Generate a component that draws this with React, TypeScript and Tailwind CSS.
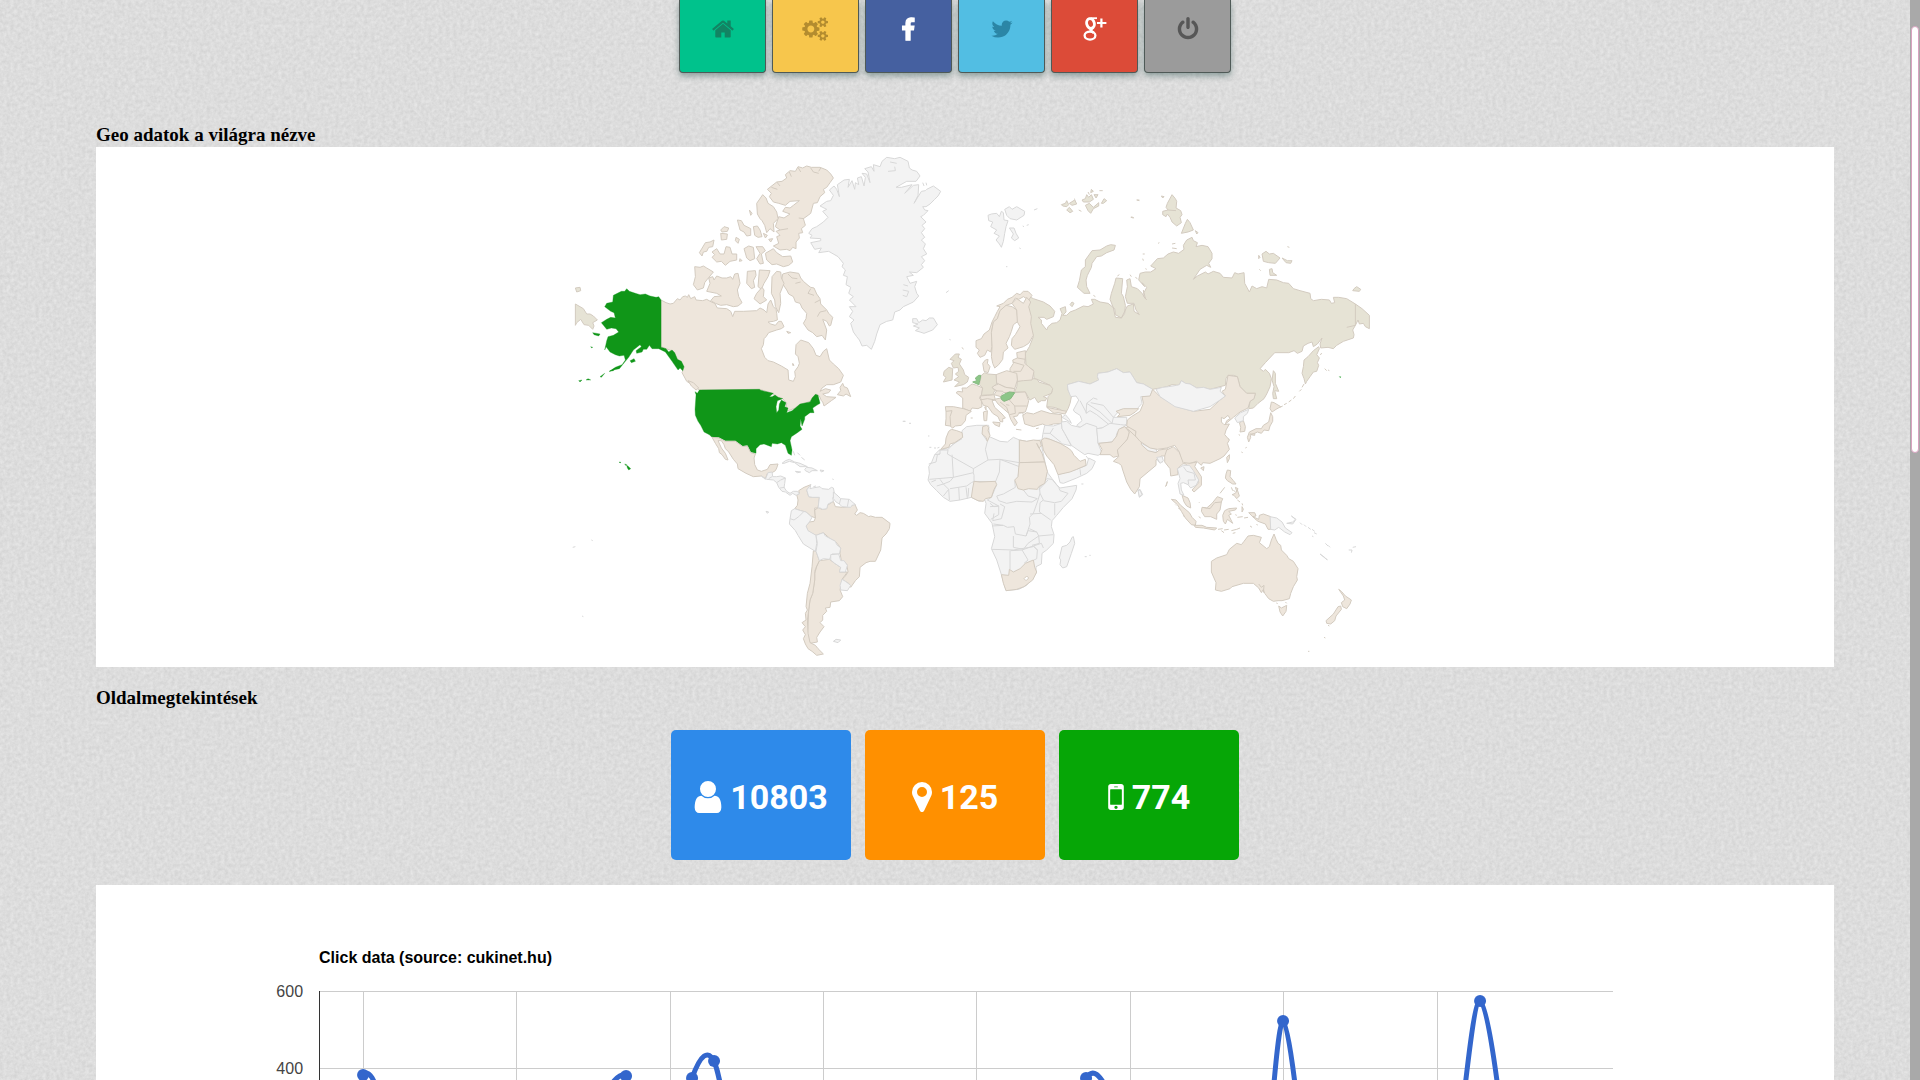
import React from "react";

type Shape = { fill: string; paths: string[] };
type Tile = { dx: number; dy: number; shapes: Shape[] };

const TAN = "#eee6dc";
const OLIVE = "#e6e3d5";
const GREY = "#f3f3f3";
const SAND = "#e6e1d3";
const GREEN = "#109618";
const MINT = "#8cc688";

// Each tile holds a part of the world drawn at three units per pixel.
const world: Tile[] = [
  {
    dx: 560,
    dy: 150,
    shapes: [
      {
        fill: TAN,
        paths: [
          "M303 450L318 458L330 462L340 460L352 446L360 450L368 440L376 438L382 442L386 434L392 446L404 440L408 450L428 452L440 448L454 456L464 460L472 474L500 476L512 484L518 500L524 484L550 484L590 482L600 474L612 480L620 488L624 462L632 450L640 470L648 478L650 490L652 510L640 514L624 516L632 522L646 526L656 514L664 514L672 530L664 536L650 540L626 548L618 560L612 566L610 584L604 596L614 622L624 632L640 636L664 648L684 660L686 690L700 694L706 680L704 664L714 650L718 640L714 620L706 612L708 584L722 570L746 578L760 596L768 616L780 620L790 604L800 596L808 630L820 642L836 656L850 676L842 696L820 704L800 704L786 714L780 724L796 716L812 720L806 728L788 732L800 740L828 742L814 752L792 768L788 756L784 752L778 738L770 732L764 744L750 754L720 764L706 774L690 780L676 784L680 760L668 746L650 740L636 730L600 718L418 720L396 704L380 694L366 668L372 652L352 628L340 604L318 596L303 590Z",
          "M668 372L690 366L716 370L722 384L730 394L744 406L752 412L762 414L770 432L780 446L782 462L800 480L806 490L818 502L812 526L808 528L800 514L788 508L800 540L796 570L786 556L770 560L758 548L744 540L730 520L738 506L740 490L726 474L720 460L706 456L700 440L686 432L680 420L664 396Z",
          "M684 372L696 384L712 386 M722 396L706 400 M752 416L744 430L762 436 M780 450L764 458 M798 482L780 486L772 500",
          "M446 384L458 380L462 390L470 378L486 384L500 384L512 380L518 388L524 372L534 370L540 400L532 420L536 440L546 458L534 468L520 470L500 464L482 466L466 460L452 452L462 440L484 438L470 430L440 424L450 400Z",
          "M404 350L420 352L430 348L440 354L460 366L450 378L440 390L434 398L430 414L412 420L400 404L406 380Z",
          "M622 118L650 96L666 94L680 84L676 74L690 62L706 64L714 50L728 54L740 48L754 52L780 52L800 60L812 72L820 84L810 98L800 112L790 118L794 128L780 140L772 158L760 160L752 190L744 196L730 206L736 226L724 236L728 248L716 250L718 264L708 276L708 296L698 292L690 302L680 298L660 300L640 288L656 280L650 260L660 256L648 244L660 240L646 230L656 200L672 204L690 192L668 184L676 172L690 174L700 166L718 152L690 154L676 166L656 160L640 156L628 140L634 130Z",
          "M634 112L652 118 M650 96L660 108 M688 66L694 80 M714 52L722 66 M752 54L760 66L776 70 M782 54L776 64 M660 240L684 236 M732 206L716 204",
          "M608 134L618 144L624 160L640 170L650 186L654 206L640 220L642 246L630 236L620 248L614 226L606 212L600 206L592 192L590 160Z",
          "M616 310L640 296L650 308L668 320L692 318L698 336L686 346L670 350L650 342L636 344L620 330Z",
          "M456 306L470 296L480 312L492 312L498 290L510 292L516 312L530 312L530 330L510 334L496 346L484 334L470 336L456 322L464 314Z",
          "M418 308L436 278L450 276L462 270L458 290L446 292L440 304L430 306L426 318Z",
          "M532 210L544 212L552 226L572 236L572 256L560 258L552 246L540 240Z",
          "M580 230L592 228L600 240L606 260L594 262L584 256Z",
          "M482 250L502 252L500 268L484 270Z",
          "M482 240L492 230L506 234L502 244L486 246Z",
          "M552 296L566 288L580 292L584 326L570 332L560 324Z",
          "M588 290L608 290L616 302L604 312L610 340L600 342L590 326L600 310Z",
          "M562 364L586 362L588 376L580 392L584 412L574 416L560 400Z",
          "M598 360L630 362L624 380L612 400L604 418L594 410Z",
          "M590 430L606 412L612 420L610 440L620 450L600 462L582 446Z",
          "M636 380L650 364L662 366L664 384L672 400L660 430L662 460L656 488L646 470L644 450L634 430Z",
          "M848 700L852 710L862 714L872 740L858 732L850 738L832 734L842 722L840 712Z",
          "M384 692L400 698L416 714L408 720L394 708Z",
          "M528 262L538 268L534 280L526 272Z M568 180L576 190L572 196Z M540 326L546 332L538 334Z M610 250L622 256L616 264Z M626 268L638 266L632 276Z",
          "M680 544L692 548L684 550Z M698 640L702 646L698 646Z",
        ],
      },
      {
        fill: GREY,
        paths: [
          "M746 250L756 236L770 230L790 216L804 202L788 184L800 178L780 168L800 154L812 152L820 136L808 120L822 108L830 118L838 140L832 104L852 90L868 88L864 112L876 92L884 118L886 98L896 104L892 84L904 80L912 108L916 82L906 70L920 72L930 98L924 66L914 56L934 50L942 64L940 44L960 50L966 34L980 22L1004 26L1020 22L1044 34L1048 54L1056 60L1070 64L1080 78L1068 94L1040 94L1008 112L1024 112L1056 104L1044 118L1034 130L1060 106L1076 104L1074 136L1062 160L1084 124L1096 122L1100 118L1120 108L1142 124L1134 138L1124 148L1110 162L1098 170L1088 170L1094 180L1104 182L1090 196L1082 200L1098 216L1086 226L1094 236L1084 248L1094 262L1084 270L1096 282L1090 296L1100 312L1084 320L1094 332L1084 344L1090 352L1070 368L1048 366L1060 376L1040 380L1050 400L1070 394L1064 410L1070 430L1076 438L1060 456L1030 470L1020 480L1004 486L998 510L980 514L960 524L950 552L944 574L934 598L920 586L906 588L898 570L890 560L880 546L872 520L882 510L868 500L878 484L868 470L888 470L868 450L880 440L866 430L872 412L858 404L862 380L850 376L856 360L846 350L850 340L834 320L806 304L776 308L784 294L764 298L752 278L782 272L782 266L750 264L756 256Z",
          "M984 64L1006 62L1004 50 M990 36L1010 40 M1028 420L1046 424L1040 440L1028 436 M1030 404L1044 408 M1088 98L1092 108 M1098 98L1100 106",
          "M1058 506L1070 506L1076 518L1088 510L1098 512L1108 504L1120 504L1132 524L1118 540L1092 550L1080 546L1066 542L1078 534L1060 528L1074 522L1058 518Z",
        ],
      },
      {
        fill: OLIVE,
        paths: [
          "M46 462L70 476L80 492L90 492L100 498L112 510L98 518L102 528L98 538L86 526L72 524L62 508L50 518L46 526Z",
          "M46 414L60 412L62 422L50 426Z",
        ],
      },
      {
        fill: GREEN,
        paths: [
          "M303 450L303 592L318 596L326 606L336 600L344 608L352 628L364 634L372 650L368 662L360 654L354 660L336 634L316 606L296 596L276 596L268 586L260 598L250 598L246 606L230 610L228 602L244 590L240 584L220 600L206 622L196 634L178 656L160 660L148 664L166 652L186 644L196 630L192 616L178 618L166 614L150 606L138 590L134 600L140 572L144 560L160 556L176 546L168 536L154 534L140 538L124 518L140 508L152 502L166 504L162 488L152 484L134 470L140 460L158 456L160 436L184 424L194 424L200 416L208 424L226 430L240 434L256 432L270 438L288 442L296 440Z",
          "M148 664L164 656L160 662Z M120 680L134 670L124 682Z M78 690L84 686L92 690Z M56 692L66 690L60 696Z M98 548L120 552L116 558L102 554Z M210 632L222 626L226 634L214 638Z M92 590L98 592L95 594Z",
        ],
      },
    ],
  },
  {
    dx: 560,
    dy: 380,
    shapes: [
      {
        fill: GREEN,
        paths: [
          "M405 35L412 40L418 30L598 28L602 31L640 40L628 50L636 50L645 45L654 52L668 56L652 62L648 80L650 98L656 90L658 72L664 60L678 68L674 80L684 84L680 98L696 92L706 84L720 72L750 66L756 54L766 43L774 46L780 70L770 76L758 84L762 98L750 98L734 110L734 118L726 138L722 116L720 138L726 148L712 158L694 170L690 182L696 210L694 226L684 220L676 196L664 188L652 192L636 190L634 200L612 192L600 194L588 206L588 220L572 216L562 196L548 198L526 182L496 182L476 172L456 172L448 164L432 156L422 136L414 124L406 106L405 88L408 44Z",
          "M200 256L206 260L212 266L206 270L202 264Z M194 252L200 254L198 257Z M177 246L183 247L180 249Z",
        ],
      },
      {
        fill: TAN,
        paths: [
          "M456 172L476 174L496 184L526 184L548 200L562 198L572 218L586 222L582 234L584 254L592 270L604 274L622 268L630 254L654 252L650 264L646 272L636 278L622 280L616 296L604 288L580 290L558 280L534 266L532 252L520 238L506 216L496 206L492 194L484 182L474 182L484 204L496 220L504 240L496 238L486 224L478 218L476 206L466 190Z",
          "M710 344L718 340L716 332L732 322L752 314L750 320L740 330L746 350L758 352L778 352L774 384L764 384L766 414L752 408L738 396L722 392L704 386L712 376L714 360Z",
          "M766 414L764 390L776 382L784 388L800 386L802 376L820 364L826 380L848 382L868 380L884 372L892 390L884 402L890 406L900 398L910 400L926 410L932 408L946 412L966 412L990 430L988 446L978 462L966 474L962 510L946 544L930 544L918 548L900 562L898 590L886 602L872 622L866 610L846 598L856 588L864 576L860 552L844 542L840 520L842 504L826 484L810 476L790 458L768 466L744 454L738 438L748 426L762 424Z",
          "M778 542L808 538L824 550L842 562L838 576L862 576L846 598L840 630L848 650L838 662L812 666L810 682L796 684L800 694L788 706L788 720L780 728L792 740L780 756L770 772L772 786L750 790L742 766L744 740L746 690L750 660L758 640L764 600L764 580L770 560Z",
          "M760 512L768 514L778 542L770 558L764 574L764 600L758 640L750 660L746 690L742 720L744 760L750 788L766 796L774 806L790 822L770 826L756 814L744 806L736 792L730 776L736 764L728 750L736 740L726 728L738 720L736 700L742 690L738 680L742 640L750 610L756 560Z",
        ],
      },
      {
        fill: GREY,
        paths: [
          "M604 288L616 298L624 278L636 276L638 290L650 290L662 288L676 294L674 310L672 322L680 334L690 340L700 334L712 334L718 342L708 346L698 340L690 346L676 336L666 334L656 322L650 308L640 300L620 298Z M650 308L662 300L676 294 M636 290L626 296 M660 324L674 322",
          "M666 250L676 242L688 238L704 246L720 250L742 260L720 260L704 248L688 244L672 250Z",
          "M734 268L740 262L756 264L772 272L756 272L748 278L736 272Z M706 274L722 276L712 278Z M780 270L792 272L784 276Z",
          "M700 214L704 226 M712 218L720 226 M724 232L734 240 M818 296L820 300 M768 318L760 320",
          "M752 314L750 326L758 324L780 320L786 326L806 328L814 322L820 324L824 344L818 354L820 364L804 372L800 386L788 388L780 384L774 384L778 352L758 352L746 350L740 330Z",
          "M820 336L834 348L842 356L868 358L886 374L876 376L872 382L846 380L838 372L828 366L820 356Z M842 356L838 372 M866 358L862 380",
          "M694 392L704 386L722 392L738 396L756 412L748 426L738 438L744 452L768 466L770 490L766 514L730 492L714 466L706 452L688 432L690 416Z M690 416L702 420L716 410L730 396",
          "M768 466L790 458L796 468L826 484L830 494L842 504L838 522L816 522L808 538L790 536L778 542L768 514L772 490Z",
          "M812 524L836 522L842 542L852 542L862 556L856 576L838 576L842 562L824 550L812 540Z",
          "M846 598L856 604L872 616L862 632L842 630L840 616Z",
          "M820 784L828 778L842 780L834 788Z M618 394L626 396L622 400Z M38 502L46 500 M94 480L98 482 M66 708L70 710",
          "M1028 124L1036 124 M1048 130L1052 130",
        ],
      },
    ],
  },
  {
    dx: 1080,
    dy: 180,
    shapes: [
      {
        fill: OLIVE,
        paths: [
          "M-152 350L-140 356L-110 366L-90 378L-76 394L-80 410L-100 418L-108 412L-126 412L-116 420L-116 430L-100 450L-96 440L-84 430L-70 428L-60 420L-54 400L-60 386L-44 380L-42 396L-52 406L-40 406L-30 396L-14 390L10 378L24 380L40 372L34 358L44 358L60 366L84 370L104 386L106 404L124 414L134 400L136 376L130 350L124 340L128 296L108 294L104 310L94 340L90 358L100 384L106 412L124 414L142 378L160 372L162 394L178 404L168 390L162 370L142 370L136 350L142 320L140 300L150 296L154 320L172 326L186 340L196 356L192 338L200 322L186 308L194 320L176 300L180 280L196 276L212 276L228 266L212 258L232 236L250 234L264 222L280 216L296 220L312 208L310 196L320 180L336 172L340 182L352 188L348 200L366 196L384 200L396 220L396 236L386 250L392 262L380 256L360 268L340 298L352 288L376 276L384 282L400 274L420 280L430 292L456 294L464 278L474 282L492 278L494 310L508 336L516 318L530 326L546 320L560 324L566 298L590 300L610 308L626 310L640 326L660 332L690 340L692 356L700 362L724 358L748 360L754 370L764 368L760 352L776 352L800 356L826 372L846 386L868 406L868 446L856 440L850 430L838 432L834 420L826 436L818 450L822 464L820 474L790 484L770 496L760 506L744 502L722 504L720 492L726 474L712 492L700 500L696 486L684 490L670 498L666 514L652 520L642 512L626 518L584 518L556 548L540 566L550 574L556 568L568 580L574 596L570 620L560 642L552 656L534 670L520 684L506 686L510 664L522 656L526 640L500 640L480 620L472 590L460 586L444 586L438 596L436 616L420 620L390 628L370 622L350 624L330 612L316 610L304 602L296 616L276 614L260 620L240 624L228 626L218 628L190 612L170 608L150 576L130 578L110 566L84 576L54 580L52 590L56 600L30 612L-4 604L-38 614L-36 630L-26 650L-30 670L-36 686L-44 700L-60 688L-78 682L-100 680L-96 650L-84 636L-90 616L-124 600L-138 596L-140 570L-162 558L-164 520L-152 500L-140 470L-152 430L-156 390Z",
          "M826 372L826 436L800 442 M190 330L192 350L200 360",
          "M262 70L276 44L286 56L290 64L288 84L302 92L306 104L300 112L304 128L290 138L276 126L270 112L262 102L258 110L248 104L248 94L264 90L258 82Z M264 90L288 92",
          "M304 160L316 130L322 118L330 128L340 150L324 156Z M346 152L354 158L350 162Z M244 48L252 50L248 54Z",
          "M546 222L558 214L568 222L580 220L600 234L586 250L566 248L550 244Z M606 234L622 242L636 242L632 250L618 248Z M568 268L576 266L578 278L590 286L570 286Z M536 226L540 232L536 236Z M538 268L542 272",
          "M818 332L822 326L830 320L842 328L838 334Z",
          "M676 612L672 596L666 580L670 560L672 540L684 530L700 512L716 500L718 506L710 524L718 534L712 548L716 556L710 574L700 576L690 590L680 604Z",
          "M580 572L586 580L586 610L596 634L584 632L590 656L580 656L578 640L582 620L576 600Z",
          "M170 60L178 60 M152 112L160 114 M188 222L194 222 M188 236L190 242 M276 192L286 190 M276 204L290 206 M234 190L238 188 M196 266L200 268 M112 288L118 284 M150 284L154 290 M166 292L172 296 M622 200L628 202",
          "M720 524L726 520 M734 566L740 572 M744 570L748 572 M672 612L666 622 M664 628L658 634 M646 648L640 656 M634 660L626 666 M620 670L612 674 M608 678L600 682",
        ],
      },
      {
        fill: GREY,
        paths: [
          "M-38 614L-4 604L30 612L56 600L52 590L54 580L84 576L110 566L130 578L150 576L170 608L190 612L218 628L210 650L182 650L186 670L170 688L120 690L100 712L140 712L140 732L116 746L90 740L50 746L36 740L20 730L0 742L-10 736L6 722L0 706L-16 696L-20 690L-4 660L-12 648L-28 650L-36 630Z",
          "M18 700L20 670L40 654L52 658 M20 670L60 696L96 730 M18 700L30 692L50 704L92 738 M32 668L70 676L100 712L96 730 M0 662L20 700",
        ],
      },
      { fill: TAN, paths: ["M108 694L130 686L176 686L166 696L150 706L112 710L120 702Z"] },
      { fill: GREEN, paths: ["M778 590L782 590L781 593Z"] },
    ],
  },
  {
    dx: 900,
    dy: 150,
    shapes: [
      {
        fill: OLIVE,
        paths: [
          "M632 284L646 286L642 300L620 308L604 318L590 320L576 340L574 352L562 376L558 390L560 410L570 430L552 430L532 412L538 392L544 360L556 350L556 330L576 302L600 300L620 288Z",
          "M484 164L496 160L500 152L506 164L500 170L488 168Z M508 160L524 150L530 162L516 166Z M500 180L508 172L518 184L510 188Z M546 150L556 146L560 134L566 142L574 134L580 148L568 156L550 156Z M556 166L568 160L580 172L596 158L596 168L580 176L572 190L564 182Z M574 118L580 124L572 128Z M604 160L612 146L620 152L610 160Z M598 122L608 122 M522 146L526 150 M564 126L568 134 M582 134L594 134L588 144Z M710 150L718 152 M694 200L702 204 M536 180L544 184",
          "M352 694L370 690L402 686L412 688L416 696L450 706L458 716L454 730L430 740L440 744L436 752L424 752L414 758L404 742L390 750L386 744L376 726L344 726L350 710Z",
          "M510 464L516 456L522 460L516 470Z M580 436L586 440",
        ],
      },
      {
        fill: GREY,
        paths: [
          "M264 196L274 192L290 190L298 200L304 184L310 188L312 210L324 212L318 230L314 250L310 274L304 292L298 282L288 270L298 258L282 250L290 240L272 230L278 216L266 212Z",
          "M314 178L328 170L336 178L350 170L374 184L372 196L350 210L330 206L320 196Z M328 234L342 234L348 250L356 264L344 272L334 264L340 252Z M402 180L412 176 M380 226L386 224 M368 228L372 230 M358 294L362 296 M318 350L322 350",
          "M138 428L146 422 M148 568L152 570",
        ],
      },
      {
        fill: TAN,
        paths: [
          "M228 572L244 566L252 552L268 540L276 516L284 500L292 484L300 470L290 468L310 460L322 448L336 442L350 430L360 434L370 424L384 424L396 436L386 450L370 440L356 448L346 444L336 460L318 466L300 482L292 506L280 516L274 548L276 590L272 606L262 600L254 616L240 622L232 610L238 600L228 592Z",
          "M300 482L318 466L336 470L350 480L354 514L340 524L334 544L328 560L318 580L324 594L310 606L308 628L296 644L284 654L278 640L274 620L276 590L274 548L280 516L292 506Z",
          "M350 480L336 460L350 446L370 460L380 442L392 456L386 470L394 500L392 520L400 556L386 580L370 590L344 598L334 586L336 566L346 554L360 530L352 516Z",
          "M248 640L256 630L264 628L262 640L270 650L264 668L252 664Z",
          "M350 608L376 602L376 620L374 640L386 650L402 664L396 690L370 692L352 694L350 676L330 664L330 656L340 640L338 630L352 624Z M352 624L376 628 M338 636L372 646L362 664L340 664",
          "M288 674L320 662L350 670L352 690L344 716L318 712L290 700Z",
          "M168 728L174 724L188 726L186 714L200 714L216 702L230 706L248 714L244 736L238 744L244 752L246 770L234 776L216 774L210 784L188 774L188 744Z",
          "M136 770L160 770L190 776L214 784L198 796L196 812L184 826L166 828L158 834L150 828L136 826L138 806L138 786Z M138 784L156 782L150 800L152 828",
          "M240 738L262 736L282 734L286 750L276 752L284 772L306 792L316 804L308 806L308 816L300 814L294 800L278 790L264 770L250 766L244 752Z M240 750L262 746L286 750",
          "M278 816L300 818L298 830L284 824Z M250 786L262 782L260 812L252 812Z M254 772L258 770L258 780Z M212 804L218 804 M348 838L364 840 M408 836L416 834",
          "M278 708L296 702L316 712L344 716L342 726L310 728L302 740L282 734L290 722L276 714Z M284 722L310 724",
          "M302 744L312 754L330 748L342 728L376 726L386 752L382 768L376 786L356 790L352 798L340 800L352 818L344 828L332 808L326 790L310 776L294 762L284 748Z M328 750L344 768L380 768 M300 756L320 772L326 790 M344 768L346 790L328 794 M318 764L328 766",
          "M368 796L380 788L400 792L424 782L450 790L484 794L486 820L460 822L440 828L428 822L400 830L374 822Z M356 788L368 788L370 796",
          "M440 772L480 780L500 784L494 792L474 788L462 790Z",
        ],
      },
      {
        fill: SAND,
        paths: [
          "M244 676L254 668L264 672L288 674L290 702L276 712L284 722L278 734L244 736L248 714L238 704Z",
          "M160 618L166 612L178 612L174 622L184 628L178 642L190 660L194 674L206 682L202 696L190 704L164 710L178 696L162 690L176 680L166 672L176 664L174 652L160 654L154 640L162 632L150 628Z M132 664L146 652L158 656L156 690L130 696L138 682L130 676Z M186 592L190 598",
        ],
      },
      { fill: MINT, paths: ["M302 740L314 732L328 726L344 728L332 746L312 754L304 748Z", "M218 696L230 692L226 684L236 676L242 676L240 688L236 704Z"] },
    ],
  },
  {
    dx: 900,
    dy: 400,
    shapes: [
      {
        fill: GREY,
        paths: [
          "M132 148L150 140L186 112L186 92L200 80L230 76L266 76L268 110L300 124L322 126L340 112L358 120L380 124L424 120L424 134L440 210L444 220L456 236L470 254L480 264L530 256L528 270L516 296L490 322L470 346L456 362L454 380L462 404L460 430L440 450L426 460L424 492L408 500L408 520L380 556L356 568L318 572L304 524L290 480L274 446L284 410L276 370L254 340L258 310L254 300L238 304L214 292L180 300L150 304L130 292L110 272L92 254L84 240L88 220L86 200L96 184L104 164L118 150Z",
          "M104 164L120 162L120 150 M118 150L144 150L142 162L220 206 M186 116L160 132L142 150 M86 192L108 186L112 164L120 162 M156 164L160 232L88 238 M160 232L220 218L220 206L264 180L300 178 M248 80L248 104L262 124L256 148L264 180 M300 178L298 216L286 246L222 244L222 226L220 218 M358 188L300 178L358 200L354 230L344 244L346 262L310 282L290 288L296 302 M358 120L358 200 M160 232L150 244L130 252L120 238 M146 268L148 300 M176 262L178 300 M198 262L202 296 M150 266L200 258L214 248L222 244 M110 258L130 252L146 268L130 288 M94 246L108 240 M206 264L204 290 M290 254L274 292L262 300L296 318L270 320 M296 302L320 310L350 304L396 306L412 296L384 288L370 270 M416 240L420 280L412 306L400 340L388 352L390 372L378 408L346 402L342 380L322 382L310 376L280 372 M420 280L430 300L420 308L418 336L452 360 M416 270L444 240 M420 262L440 236L456 238L476 262L480 272L504 280L484 304L464 308L430 302 M464 310L464 346 M390 342L424 340 M388 386L410 396L416 408L460 404 M378 408L384 392L410 396 M340 408L340 442L370 448L384 430L416 408L418 430L396 436 M276 448L340 450L400 440 M330 452L330 508 M332 452L366 450L384 480L372 490 M366 450L400 438L412 450L410 476L402 480 M412 450L400 438L424 430L430 444 M276 378L310 376 M300 312L314 320L304 356L278 362L282 340 M270 310L282 320L296 318 M272 358L296 344L296 318",
          "M516 412L520 410L524 430L514 460L500 500L488 504L480 494L482 480L478 474L486 440L500 436L510 426Z",
          "M426 120L428 104L434 76L460 78L484 70L486 86L494 100L514 138L480 130L440 114L430 122Z M430 100L450 100L460 84 M450 100L484 128",
          "M484 66L500 64L514 76L540 82L560 70L590 80L592 106L594 130L606 160L594 166L564 160L554 164L528 146L514 136L494 100L486 86Z M486 52L496 44L508 58L514 70L500 60Z",
          "M590 86L606 84L630 70L662 74L680 76L660 86L650 100L648 112L636 126L594 130Z",
          "M474 224L530 208L560 196L566 174L586 184L576 206L560 220L530 234L490 250L480 248Z M540 208L542 226 M558 168L566 178",
          "M720 128L744 140L770 148L768 158L744 154L720 140Z M714 270L720 268L728 284L718 292Z M770 176L786 170L788 186L776 186Z",
          "M554 470L560 470 M568 466L572 466 M544 252L550 252 M84 108L88 108 M88 142L94 142 M102 144L108 144 M112 144L118 142",
          "M10 64L16 64 M28 70L32 70",
        ],
      },
      {
        fill: TAN,
        paths: [
          "M146 94L154 88L170 92L186 98L188 112L164 128L150 132L146 142L122 148L136 132L138 114Z",
          "M248 80L260 76L266 82L264 92L270 106L262 124L258 112L246 102Z",
          "M358 120L380 124L400 120L420 122L424 138L416 144L410 130L426 160L434 186L358 188Z",
          "M358 188L434 186L442 214L434 250L416 260L412 268L386 266L370 270L354 266L344 240L354 230L356 204Z",
          "M222 244L240 246L286 244L290 254L282 268L274 292L256 296L250 304L234 302L214 292L218 264Z",
          "M304 524L326 526L328 508L340 516L360 506L376 490L400 480L404 502L410 516L398 540L372 560L350 568L318 572L310 550Z",
          "M424 120L434 114L450 118L480 130L504 144L514 152L522 166L534 178L540 184L556 178L558 196L530 208L510 216L474 224L462 194L440 168L430 150Z",
          "M596 130L636 126L650 108L656 88L674 80L688 96L686 108L680 120L664 140L652 152L656 168L640 172L630 164L600 164L606 148Z",
          "M688 96L678 82L690 80L706 94L712 110L724 120L724 134L744 152L768 158L778 150L804 146L810 168L784 168L768 180L768 196L744 216L720 236L718 260L704 282L692 268L680 246L668 210L664 196L656 190L640 184L656 170L652 150L682 118Z M684 88L710 112",
          "M798 256L802 246 M796 260L800 254",
        ],
      },
      { fill: "#ffffff", paths: ["M372 536L380 528L386 534L378 542Z"] },
    ],
  },
  {
    dx: 1120,
    dy: 400,
    shapes: [
      {
        fill: TAN,
        paths: [
          "M98 -32L120 -10L170 20L220 34L270 28L300 0L316 -12L306 -26L316 -32L324 -74L352 -70L360 -40L380 -20L406 -20L402 -4L390 4L384 24L360 36L340 52L316 72L320 62L330 56L324 46L312 56L304 52L304 66L312 74L328 72L318 90L314 104L328 120L322 130L328 148L312 168L300 176L270 190L248 188L244 196L230 184L210 190L190 192L182 178L178 156L164 136L140 144L112 148L90 144L60 124L46 108L48 94L20 78L22 60L34 50L60 34L70 10L66 -10L90 -12Z",
          "M134 168L140 150L160 140L178 158L190 190L172 206L174 224L152 228L150 206L134 186Z",
          "M192 188L210 190L230 186L224 200L244 230L244 256L222 276L216 270L236 248L228 226L206 200Z M242 204L252 200L250 212Z",
          "M186 286L204 294L210 308L212 324L200 318L192 306Z",
          "M154 298L168 300L182 316L208 338L216 352L228 364L226 376L214 374L196 354L184 334L172 314Z M236 350L242 354",
          "M222 376L246 376L260 382L290 384L284 390L250 384L226 382Z M294 388L308 386 M312 390L326 388 M334 392L350 388L360 384 M338 400L346 398 M304 392L312 398",
          "M246 322L260 324L276 310L292 290L308 296L304 306L300 330L290 342L290 358L272 350L254 350L244 334Z M248 322L270 326L284 308L304 306",
          "M314 332L326 326L350 324L346 330L326 334L334 342L326 346L338 370L322 358L316 372L310 364L308 346Z",
          "M366 320L370 328L366 336Z M352 352L368 350 M372 354L384 352 M346 344L350 346 M390 378L396 382 M410 372L412 376 M366 310L368 316",
          "M386 338L404 338L408 348L398 350L416 358L418 346L430 342L452 350L452 388L444 388L436 372L414 364L404 356Z",
          "M318 222L322 210L332 212L330 230L340 242L348 252L338 252L322 242L316 234Z M336 284L346 280L352 270L358 288L350 296L342 286Z M300 280L314 262 M334 262L338 272 M346 262L354 266L350 274Z M340 270L346 276",
          "M320 172L328 164L328 176L322 188Z M324 116L328 118",
          "M358 68L370 62L376 80L374 94L360 96L362 82Z M356 104L360 106",
          "M454 6L462 8L482 20L468 28L456 36L450 26Z M452 38L458 50L458 64L450 78L446 92L432 90L424 100L412 96L400 102L390 102L392 112L386 126L382 112L388 96L408 86L424 86L430 76L446 66Z M392 104L404 100L404 106Z M364 156L368 158 M376 144L380 142",
          "M274 484L290 474L320 464L328 448L350 430L364 434L372 424L384 408L400 406L424 412L418 428L440 446L448 440L454 420L462 402L468 418L474 430L482 436L484 450L500 466L506 476L520 484L534 506L530 530L532 540L520 560L512 580L508 596L486 602L474 602L460 604L446 596L434 580L430 568L424 578L416 564L400 550L370 550L336 560L330 566L304 574L286 570L288 548L274 516Z M416 552L424 562L432 556L430 578",
          "M476 618L484 624L500 616L498 634L488 648L480 636Z M470 608L472 612 M496 606L500 610",
          "M656 568L664 574L676 588L694 600L690 612L680 626L668 620L664 608L674 600L670 588Z M654 620L662 618L664 628L648 648L644 662L632 672L620 670L618 662L640 642Z M624 676L628 678 M612 712L616 714 M564 754L568 754",
          "M236 306L238 308 M352 300L360 306 M138 258L142 244 M176 324L178 328 M190 346L192 350 M166 314L168 316",
        ],
      },
      {
        fill: GREY,
        paths: [
          "M108 -32L128 -38L146 -40L170 -44L178 -46L184 -58L196 -50L210 -48L230 -36L250 -38L270 -32L304 -38L300 -26L316 -12L300 0L270 20L220 34L165 20L120 -10Z",
          "M344 54L362 38L386 28L382 40L370 50L370 62L352 68Z",
          "M172 206L190 196L208 196L220 212L236 240L228 256L212 264L204 254L190 248L182 250L184 270L192 286L180 282L174 250L180 236Z M190 200L200 214L222 220L226 240L204 240L206 254",
          "M450 350L470 354L486 366L496 384L516 398L510 404L494 396L476 382L464 390L452 388Z M500 370L518 366L526 358L514 348L528 358L518 372Z M540 368L546 374 M552 374L558 380 M564 382L572 388 M576 388L584 394 M576 408L580 410 M582 398L590 402 M600 462L622 480L616 474Z M616 430L624 438 M624 436L630 442 M686 450L696 450L694 458 M698 442L708 440",
          "M110 172L126 170L130 182L120 190Z M54 272L60 270L66 284L58 290Z",
        ],
      },
    ],
  },
];

const strokeOf = (fill: string) =>
  fill === GREEN ? "#109618" : fill === GREY ? "#d8d8d8" : fill === MINT ? "#86b97f" : "#d3cbc0";

// Closed rings are land; open strokes are borders and tiny islets.
function WorldMap() {
  return (
    <svg viewBox="96 147 1738 520" className="block h-[520px] w-full" role="img" aria-label="Geo adatok a világra nézve">
      {world.map((t, i) => (
        <g key={i} transform={`translate(${t.dx} ${t.dy}) scale(0.33333)`} strokeLinejoin="round">
          {t.shapes.map((s, j) =>
            s.paths
              .flatMap((p) => p.split("M").filter((x) => x.trim()))
              .map((sub, k) => (
                <path
                  key={`${j}-${k}`}
                  d={`M${sub}`}
                  fill={sub.includes("Z") ? s.fill : "none"}
                  stroke={strokeOf(s.fill)}
                  strokeWidth={s.fill === GREEN ? 1 : 3}
                />
              ))
          )}
        </g>
      ))}
    </svg>
  );
}

const ICONS = {
  home: "M1472 992v480q0 26-19 45t-45 19h-384v-384h-256v384h-384q-26 0-45-19t-19-45v-480q0-1 .5-3t.5-3l575-474 575 474q1 2 1 6zm223-69l-62 74q-8 9-21 11h-3q-13 0-21-7l-692-577-692 577q-12 8-24 7-13-2-21-11l-62-74q-8-10-7-23.5t11-21.5l719-599q32-26 76-26t76 26l244 204v-195q0-14 9-23t23-9h192q14 0 23 9t9 23v408l219 182q10 8 11 21.5t-7 23.5z",
  cogs: "M832 896q0-106-75-181t-181-75-181 75-75 181 75 181 181 75 181-75 75-181zm768 512q0-52-38-90t-90-38-90 38-38 90q0 53 37.5 90.5t90.5 37.5 90.5-37.5 37.5-90.5zm0-1024q0-52-38-90t-90-38-90 38-38 90q0 53 37.5 90.5t90.5 37.5 90.5-37.5 37.5-90.5zm-384 421v185q0 10-7 19.5t-16 10.5l-155 24q-11 35-32 76 34 48 90 115 7 11 7 20 0 12-7 19-23 30-82.5 89.5t-78.5 59.5q-11 0-21-7l-115-90q-37 19-77 31-11 108-23 155-7 24-30 24h-186q-11 0-20-7.5t-10-17.5l-23-153q-34-10-75-31l-118 89q-7 7-20 7-11 0-21-8-144-133-144-160 0-9 7-19 10-14 41-53t47-61q-23-44-35-82l-152-24q-10-1-17-9.5t-7-19.5v-185q0-10 7-19.5t16-10.5l155-24q11-35 32-76-34-48-90-115-7-11-7-20 0-12 7-20 22-30 82-89t79-59q11 0 21 7l115 90q34-18 77-32 11-108 23-154 7-24 30-24h186q11 0 20 7.5t10 17.5l23 153q34 10 75 31l118-89q8-7 20-7 11 0 21 8 144 133 144 160 0 8-7 19-12 16-42 54t-45 60q23 48 34 82l152 23q10 2 17 10.5t7 19.5zm640 533v140q0 16-149 31-12 27-30 52 51 113 51 138 0 4-4 7-122 71-124 71-8 0-46-47t-52-68q-20 2-30 2t-30-2q-14 21-52 68t-46 47q-2 0-124-71-4-3-4-7 0-25 51-138-18-25-30-52-149-15-149-31v-140q0-16 149-31 13-29 30-52-51-113-51-138 0-4 4-7 4-2 35-20t59-34 30-16q8 0 46 46.5t52 67.5q20-2 30-2t30 2q51-71 92-112l6-2q4 0 124 70 4 3 4 7 0 25-51 138 17 23 30 52 149 15 149 31zm0-1024v140q0 16-149 31-12 27-30 52 51 113 51 138 0 4-4 7-122 71-124 71-8 0-46-47t-52-68q-20 2-30 2t-30-2q-14 21-52 68t-46 47q-2 0-124-71-4-3-4-7 0-25 51-138-18-25-30-52-149-15-149-31v-140q0-16 149-31 13-29 30-52-51-113-51-138 0-4 4-7 4-2 35-20t59-34 30-16q8 0 46 46.5t52 67.5q20-2 30-2t30 2q51-71 92-112l6-2q4 0 124 70 4 3 4 7 0 25-51 138 17 23 30 52 149 15 149 31z",
  facebook: "M1343 12v264h-157q-86 0-116 36t-30 108v189h293l-39 296h-254v759h-306v-759h-255v-296h255v-218q0-186 104-288.5t277-102.5q147 0 228 12z",
  twitter: "M1684 408q-67 98-162 167 1 14 1 42 0 130-38 259.5t-115.5 248.5-184.5 210.5-258 146-323 54.5q-271 0-496-145 35 4 78 4 225 0 401-138-105-2-188-64.5t-114-159.5q33 5 61 5 43 0 85-11-112-23-185.5-111.5t-73.5-205.5v-4q68 38 146 41-66-44-105-115t-39-154q0-88 44-163 121 149 294.5 238.5t371.5 99.5q-8-38-8-74 0-134 94.5-228.5t228.5-94.5q140 0 236 102 109-21 205-78-37 115-142 178 93-10 186-50z",
  power: "M1664 896q0 156-61 298t-164 245-245 164-298 61-298-61-245-164-164-245-61-298q0-182 80.5-343t226.5-270q43-32 95.5-25t83.5 50q32 42 24.5 94.5t-49.5 84.5q-98 74-151.5 181t-53.5 228q0 104 40.5 198.5t109.5 163.5 163.5 109.5 198.5 40.5 198.5-40.5 163.5-109.5 109.5-163.5 40.5-198.5q0-121-53.5-228t-151.5-181q-42-32-49.5-84.5t24.5-94.5q31-43 84-50t95 25q146 109 226.5 270t80.5 343zm-640-768v640q0 52-38 90t-90 38-90-38-38-90v-640q0-52 38-90t90-38 90 38 38 90z",
  user: "M1536 1399q0 109-62.5 187t-150.5 78h-854q-88 0-150.5-78t-62.5-187q0-85 8.5-160.5t31.5-152 58.5-131 94-89 134.5-34.5q131 128 313 128t313-128q76 0 134.5 34.5t94 89 58.5 131 31.5 152 8.5 160.5zm-256-887q0 159-112.5 271.5t-271.5 112.5-271.5-112.5-112.5-271.5 112.5-271.5 271.5-112.5 271.5 112.5 112.5 271.5z",
  marker: "M1152 640q0-106-75-181t-181-75-181 75-75 181 75 181 181 75 181-75 75-181zm256 0q0 109-33 179l-364 774q-16 33-47.5 52t-67.5 19-67.5-19-46.5-52l-365-774q-33-70-33-179 0-212 150-362t362-150 362 150 150 362z",
  mobile: "M976 1408q0-33-23.5-56.5t-56.5-23.5-56.5 23.5-23.5 56.5 23.5 56.5 56.5 23.5 56.5-23.5 23.5-56.5zm208-160v-704q0-13-9.5-22.5t-22.5-9.5h-512q-13 0-22.5 9.5t-9.5 22.5v704q0 13 9.5 22.5t22.5 9.5h512q13 0 22.5-9.5t9.5-22.5zm-192-848q0-16-16-16h-160q-16 0-16 16t16 16h160q16 0 16-16zm288-16v1024q0 52-38 90t-90 38h-512q-52 0-90-38t-38-90v-1024q0-52 38-90t90-38h512q52 0 90 38t38 90z",
};

function Glyph({ d, box = "0 0 1792 1792", className }: { d: string; box?: string; className: string }) {
  return (
    <svg viewBox={box} className={className} fill="currentColor" aria-hidden="true">
      <path d={d} />
    </svg>
  );
}

function GooglePlus() {
  return (
    <svg viewBox="0 0 24 24" className="h-6 w-6" fill="none" stroke="currentColor" aria-hidden="true">
      <ellipse cx="7.5" cy="6.5" rx="3.8" ry="5" strokeWidth="2.8" transform="rotate(-14 7.5 6.5)" />
      <path d="M7.5 1.2H14" strokeWidth="1.8" />
      <path d="M10 10.5C6.4 13 7.6 13.8 10.6 15.6" strokeWidth="2.8" />
      <ellipse cx="7" cy="18.6" rx="5.4" ry="4" strokeWidth="2.3" />
      <path d="M18.4 1.6v8.8M14 6H23.4" strokeWidth="2.2" />
    </svg>
  );
}

const nav = [
  { label: "Home", cls: "bg-[#00c28c] text-[#128463]", icon: <Glyph d={ICONS.home} className="h-6 w-6" /> },
  { label: "Settings", cls: "bg-[#f7c64c] text-[#b38c2f]", icon: <Glyph d={ICONS.cogs} box="0 0 1920 1792" className="h-6 w-7" /> },
  { label: "Facebook", cls: "bg-[#4560a0] text-white", icon: <Glyph d={ICONS.facebook} box="64 -64 1792 1792" className="h-6 w-6 stroke-current stroke-[90px]" /> },
  { label: "Twitter", cls: "bg-[#52bee3] text-[#2b86a6]", icon: <Glyph d={ICONS.twitter} className="h-6 w-6" /> },
  { label: "Google Plus", cls: "bg-[#dc4b38] text-white", icon: <GooglePlus /> },
  { label: "Power", cls: "bg-[#9b9b9b] text-[#575757]", icon: <Glyph d={ICONS.power} className="h-6 w-6" /> },
];

const stats = [
  { value: "10803", cls: "bg-[#2e8aea]", icon: <Glyph d={ICONS.user} box="256 128 1280 1536" className="h-8 w-7" /> },
  { value: "125", cls: "bg-[#ff9000]", icon: <Glyph d={ICONS.marker} box="384 128 1024 1536" className="h-[30px] w-5" /> },
  { value: "774", cls: "bg-[#06a606]", icon: <Glyph d={ICONS.mobile} box="512 256 768 1280" className="h-[26px] w-4" /> },
];

const gridX = [363, 516, 670, 823, 976, 1130, 1283, 1437];
const points = [
  [363, 1075],
  [626, 1076],
  [692, 1078],
  [714, 1061],
  [1086, 1078],
  [1283, 1021],
  [1480, 1001],
];

function ClickChart() {
  return (
    <svg viewBox="96 885 1738 520" className="block h-[520px] w-full" role="img" aria-label="Click data">
      <text x="319" y="963" fontSize="16" fontWeight="700" fontFamily="'Liberation Sans', Arial, sans-serif">
        Click data (source: cukinet.hu)
      </text>
      <g stroke="#cccccc" shapeRendering="crispEdges">
        {[991, 1068, 1145].map((y) => (
          <path key={y} d={`M319 ${y + 0.5}H1613`} />
        ))}
        {gridX.map((x) => (
          <path key={x} d={`M${x + 0.5} 991V1222`} />
        ))}
      </g>
      <path d="M319.5 991V1222" stroke="#333333" shapeRendering="crispEdges" />
      <g fontSize="16" textAnchor="end" fill="#444444" fontFamily="'Liberation Sans', Arial, sans-serif">
        <text x="303" y="997">600</text>
        <text x="303" y="1074">400</text>
      </g>
      <g fill="none" stroke="#3366cc" strokeWidth="5">
        <path d="M363 1073C370 1071 374 1078 380 1100M604 1100C611 1082 617 1075 626 1074C628 1082 630 1090 632 1110M684 1105C688 1092 690 1084 692 1078C701 1053 708 1050 714 1061C719 1074 721 1086 724 1110M1078 1105C1081 1090 1083 1082 1086 1078C1093 1068 1099 1073 1110 1094" />
        <path d="M1270 1130C1274 1080 1279 1021 1283 1021S1294 1070 1300 1130M1460 1130C1467 1070 1474 1001 1480 1001S1495 1060 1503 1130" />
      </g>
      <g fill="#3366cc">
        {points.map(([x, y]) => (
          <circle key={x} cx={x} cy={y} r="6" />
        ))}
      </g>
    </svg>
  );
}

function PaperTexture() {
  return (
    <svg className="absolute inset-0 -z-10 h-full w-full" aria-hidden="true">
      <filter id="paper" x="0" y="0" width="100%" height="100%" colorInterpolationFilters="sRGB">
        <feTurbulence type="fractalNoise" baseFrequency="0.28" numOctaves="3" seed="4" />
        <feColorMatrix values="0.1 0 0 0 0.815  0.1 0 0 0 0.815  0.1 0 0 0 0.815  0 0 0 0 1" />
      </filter>
      <rect width="100%" height="100%" filter="url(#paper)" />
    </svg>
  );
}

export default function App() {
  return (
    <div className="relative isolate flex h-screen overflow-hidden bg-[#dddddd] text-black">
      <PaperTexture />
      <main className="min-w-0 flex-1 overflow-hidden">
        <nav className="flex justify-center gap-1.5">
          {nav.map((n) => (
            <a
              key={n.label}
              href="#"
              aria-label={n.label}
              className={`flex h-[73px] w-[87px] justify-center rounded-b-[4px] border border-t-0 border-[#4f5a57] pt-[17px] shadow-[0_3px_6px_rgba(40,80,75,0.45)] ${n.cls}`}
            >
              {n.icon}
            </a>
          ))}
        </nav>

        <div className="ml-24 w-[91%] font-['Liberation_Serif',serif]">
          <h3 className="pt-[50px] text-[19px] leading-6 font-bold">Geo adatok a világra nézve</h3>
          <section className="bg-white">
            <WorldMap />
          </section>
          <h3 className="pt-[19px] text-[19px] leading-6 font-bold">Oldalmegtekintések</h3>
        </div>

        <div className="mt-5 flex justify-center gap-3.5">
          {stats.map((s) => (
            <div
              key={s.value}
              className={`flex h-[130px] w-[180px] items-center justify-center gap-2 rounded-[5px] pt-1 font-[Roboto,sans-serif] text-[34px] font-bold text-white ${s.cls}`}
            >
              {s.icon}
              <span>{s.value}</span>
            </div>
          ))}
        </div>

        <section className="mt-[25px] ml-24 w-[91%] bg-white">
          <ClickChart />
        </section>
      </main>
      <div className="w-2.5 bg-[#a9a9a9] px-px pt-[26px]" aria-hidden="true">
        <div className="h-[427px] rounded-full border border-[#d9a3c0] bg-white" />
      </div>
    </div>
  );
}
